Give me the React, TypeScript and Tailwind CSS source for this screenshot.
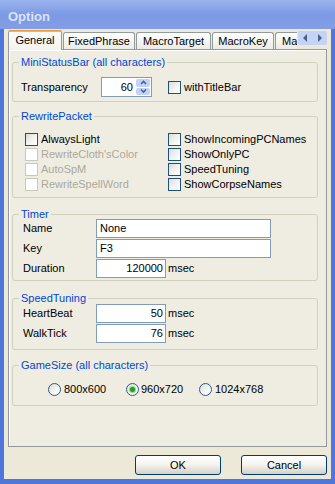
import clsx from "clsx";
import { ReactNode } from "react";

function CheckBox({ disabled }: { disabled?: boolean }) {
  return (
    <span
      className={clsx(
        "block w-[13px] h-[13px] shrink-0 border",
        disabled
          ? "border-[#cac8bb] bg-white"
          : "border-[#1c5180] bg-linear-to-br from-[#dcdcd7] via-[#f2f2ee] to-white"
      )}
    />
  );
}

function CheckRow({ label, disabled }: { label: string; disabled?: boolean }) {
  return (
    <div className="flex items-center h-[15px]">
      <CheckBox disabled={disabled} />
      <span className={clsx("ml-[3px] leading-[13px] whitespace-nowrap", disabled && "text-[#aca899]")}>
        {label}
      </span>
    </div>
  );
}

function Radio({ checked }: { checked?: boolean }) {
  return (
    <span className="flex w-[13px] h-[13px] shrink-0 items-center justify-center rounded-full border border-[#2f5a8a] bg-linear-to-br from-[#dcdcd7] via-[#f2f2ee] to-white">
      {checked && <span className="block w-[5px] h-[5px] rounded-full bg-[#21a121] shadow-[0_0_0_1px_#8fdc8f]" />}
    </span>
  );
}

function Group({ title, className, children }: { title: string; className?: string; children: ReactNode }) {
  return (
    <fieldset className={clsx("border border-[#d0d0bf] rounded-[3px]", className)}>
      <legend className="ml-[6px] px-[2px] text-[#0046d5] leading-[13px]">{title}</legend>
      {children}
    </fieldset>
  );
}

function TextBox({ value, right, className }: { value: string; right?: boolean; className?: string }) {
  return (
    <div
      className={clsx(
        "flex items-center h-[19px] border border-[#7f9db9] bg-white",
        right ? "justify-end pr-[2px]" : "pl-[3px]",
        className
      )}
    >
      {value}
    </div>
  );
}

function FieldRow({ label, children }: { label: string; children: ReactNode }) {
  return (
    <div className="flex items-center">
      <span className="w-[73px]">{label}</span>
      {children}
    </div>
  );
}

function SpinArrow({ up }: { up?: boolean }) {
  return (
    <svg width="7" height="6" viewBox="0 0 7 6">
      <path d={up ? "M1 4 L3.5 1.5 L6 4" : "M1 1.5 L3.5 4 L6 1.5"} fill="none" stroke="#4d6185" strokeWidth="1.6" />
    </svg>
  );
}

function Tab({ label, width, selected }: { label: string; width: string; selected?: boolean }) {
  if (selected) {
    return (
      <div
        className={clsx(
          "relative z-10 flex flex-col h-[20px] translate-y-[1px] border-x border-[#919b9c] rounded-t-[3px] bg-linear-to-b from-[#fcfcfe] to-[#f4f3ee]",
          width
        )}
      >
        <div className="h-[3px] -mx-[1px] rounded-t-[3px] bg-linear-to-b from-[#e68b2c] to-[#ffc83c]" />
        <div className="flex-1 flex items-center justify-center pb-[2px]">{label}</div>
      </div>
    );
  }
  return (
    <div
      className={clsx(
        "flex items-center justify-center h-[17px] ml-[1px] border border-b-0 border-[#919b9c] rounded-t-[3px] bg-linear-to-b from-white to-[#ecebe6] whitespace-nowrap",
        width
      )}
    >
      {label}
    </div>
  );
}

export default function App() {
  return (
    <div className="w-[335px] h-[484px] flex flex-col bg-[#4f76dd] font-['Liberation_Sans',Arial,sans-serif] text-[11px] text-black">
      <div className="h-[29px] shrink-0 flex items-center pl-[8px] pt-[5px] text-[13px] font-bold text-[#d8e4f8] bg-linear-to-b from-[#9cb4ee] via-[#7c99e3] to-[#819ee6]">
        Option
      </div>
      <div className="flex-1 flex flex-col mx-[4px] mb-[5px] px-[4px] bg-[#ece9d8]">
        {/* tab strip */}
        <div className="flex items-end h-[20px]">
          <Tab label="General" width="w-[54px]" selected />
          <Tab label="FixedPhrase" width="w-[72px]" />
          <Tab label="MacroTarget" width="w-[75px]" />
          <Tab label="MacroKey" width="w-[62px]" />
          <div className="ml-[1px] w-[22px] h-[17px] overflow-hidden border-l border-t border-[#919b9c] rounded-tl-[3px] bg-linear-to-b from-white to-[#ecebe6] pl-[6px] flex items-center whitespace-nowrap">
            Ma
          </div>
          <div className="self-start mt-[2px] ml-[1px] flex h-[14px] w-[29px] rounded-[2px] bg-[#c4d4f7]">
            <div className="flex-1 flex items-center justify-center">
              <svg width="6" height="8" viewBox="0 0 6 8">
                <path d="M5 0 L1 4 L5 8 Z" fill="#4d6185" />
              </svg>
            </div>
            <div className="flex-1 flex items-center justify-center">
              <svg width="6" height="8" viewBox="0 0 6 8">
                <path d="M1 0 L5 4 L1 8 Z" fill="#4d6185" />
              </svg>
            </div>
          </div>
        </div>

        {/* tab page */}
        <div className="h-[398px] flex flex-col border border-[#919b9c] bg-[#efede2] shadow-[inset_1px_1px_0_#fff] pl-[3px] pr-[8px] pt-[6px]">
          <Group title="MiniStatusBar (all characters)" className="pb-[4px]">
            <div className="flex items-center pl-[8px] pt-[8px]">
              <span className="w-[80px]">Transparency</span>
              <div className="flex w-[51px] h-[20px] border border-[#7f9db9] bg-white">
                <div className="flex-1 flex items-center justify-end pr-[2px]">60</div>
                <div className="w-[16px] flex flex-col gap-[1px] p-[1px]">
                  <div className="flex-1 flex items-center justify-center rounded-[2px] bg-[#c1d3fb]">
                    <SpinArrow up />
                  </div>
                  <div className="flex-1 flex items-center justify-center rounded-[2px] bg-[#c1d3fb]">
                    <SpinArrow />
                  </div>
                </div>
              </div>
              <div className="ml-[16px]">
                <CheckRow label="withTitleBar" />
              </div>
            </div>
          </Group>

          <Group title="RewritePacket" className="mt-[8px] pb-[5px]">
            <div className="grid grid-cols-[143px_1fr] pl-[12px] pt-[9px]">
              <CheckRow label="AlwaysLight" />
              <CheckRow label="ShowIncomingPCNames" />
              <CheckRow label="RewriteCloth'sColor" disabled />
              <CheckRow label="ShowOnlyPC" />
              <CheckRow label="AutoSpM" disabled />
              <CheckRow label="SpeedTuning" />
              <CheckRow label="RewriteSpellWord" disabled />
              <CheckRow label="ShowCorpseNames" />
            </div>
          </Group>

          <Group title="Timer" className="mt-[10px] pb-[2px]">
            <div className="flex flex-col gap-[1px] pl-[10px] -mt-[2px]">
              <FieldRow label="Name">
                <TextBox value="None" className="w-[175px]" />
              </FieldRow>
              <FieldRow label="Key">
                <TextBox value="F3" className="w-[175px]" />
              </FieldRow>
              <FieldRow label="Duration">
                <TextBox value="120000" right className="w-[70px]" />
                <span className="ml-[2px]">msec</span>
              </FieldRow>
            </div>
          </Group>

          <Group title="SpeedTuning" className="mt-[11px] pb-[6px]">
            <div className="flex flex-col gap-[1px] pl-[10px] -mt-[1px]">
              <FieldRow label="HeartBeat">
                <TextBox value="50" right className="w-[70px]" />
                <span className="ml-[2px]">msec</span>
              </FieldRow>
              <FieldRow label="WalkTick">
                <TextBox value="76" right className="w-[70px]" />
                <span className="ml-[2px]">msec</span>
              </FieldRow>
            </div>
          </Group>

          <Group title="GameSize (all characters)" className="mt-[9px] pb-[7px]">
            <div className="flex items-center pl-[35px] pt-[9px]">
              <div className="w-[78px] flex items-center gap-[3px]">
                <Radio />
                <span>800x600</span>
              </div>
              <div className="w-[73px] flex items-center gap-[2px]">
                <Radio checked />
                <span>960x720</span>
              </div>
              <div className="flex items-center gap-[3px]">
                <Radio />
                <span>1024x768</span>
              </div>
            </div>
          </Group>
        </div>

        {/* buttons */}
        <div className="flex justify-end gap-[20px] mt-[8px]">
          <button className="w-[86px] h-[20px] rounded-[3px] border border-[#003c74] bg-linear-to-b from-white via-[#f4f3ee] to-[#d6d0c5]">
            OK
          </button>
          <button className="w-[86px] h-[20px] rounded-[3px] border border-[#003c74] bg-linear-to-b from-white via-[#f4f3ee] to-[#d6d0c5]">
            Cancel
          </button>
        </div>
      </div>
    </div>
  );
}
